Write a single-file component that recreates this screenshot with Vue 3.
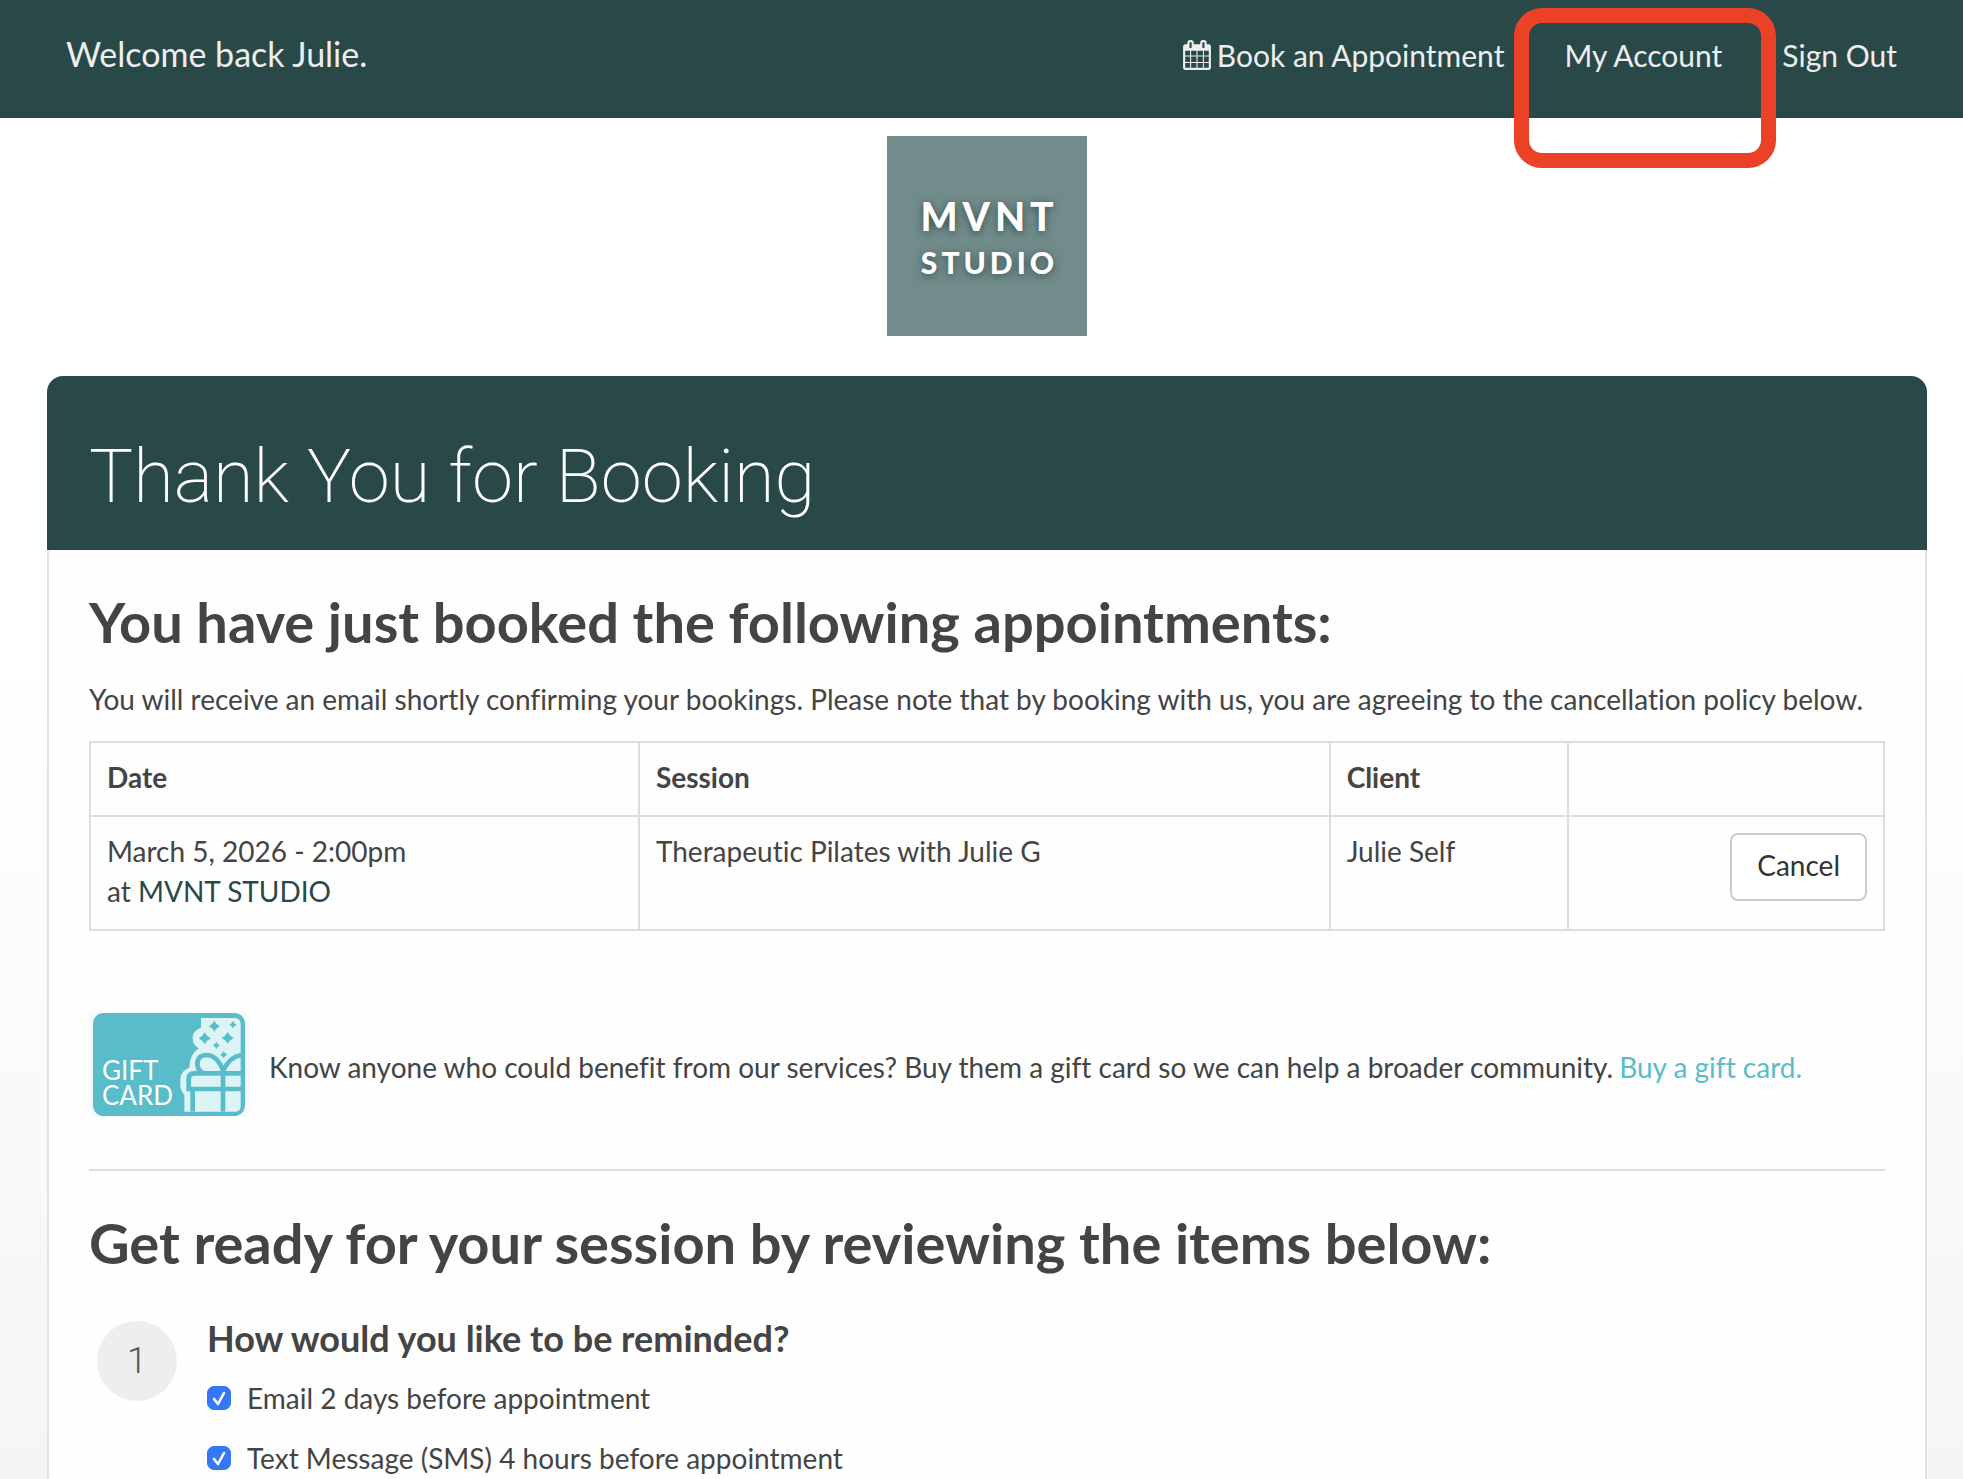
<script setup>
import { ref } from 'vue';

const bookings = ref([
    { id: 1, date: 'March 5, 2026 - 2:00pm', location: 'MVNT STUDIO', session: 'Therapeutic Pilates with Julie G', client: 'Julie Self' },
]);

const reminders = ref([
    { id: 'remind-email', label: 'Email 2 days before appointment', checked: true },
    { id: 'remind-sms', label: 'Text Message (SMS) 4 hours before appointment', checked: true },
]);

const cancel = (id) => {
    bookings.value = bookings.value.filter((b) => b.id !== id);
}
</script>

<template>
    <div class="page">
        <header class="topbar">
            <p class="welcome">Welcome back Julie.</p>
            <nav class="nav">
                <a href="#book">
                    <svg class="calendar" viewBox="0 0 1664 1792" aria-hidden="true">
                        <path fill="currentColor"
                            d="M128 1664h288v-288h-288v288zm352 0h320v-288h-320v288zm-352-352h288v-320h-288v320zm352 0h320v-320h-320v320zm-352-384h288v-288h-288v288zm736 736h320v-288h-320v288zm-384-736h320v-288h-320v288zm768 736h288v-288h-288v288zm-384-352h320v-320h-320v320zm-352-864v-288q0-13-9.5-22.5t-22.5-9.5h-64q-13 0-22.5 9.5t-9.5 22.5v288q0 13 9.5 22.5t22.5 9.5h64q13 0 22.5-9.5t9.5-22.5zm736 864h288v-320h-288v320zm-384-384h320v-288h-320v288zm384 0h288v-288h-288v288zm32-480v-288q0-13-9.5-22.5t-22.5-9.5h-64q-13 0-22.5 9.5t-9.5 22.5v288q0 13 9.5 22.5t22.5 9.5h64q13 0 22.5-9.5t9.5-22.5zm384-64v1280q0 52-38 90t-90 38h-1408q-52 0-90-38t-38-90v-1280q0-52 38-90t90-38h128v-96q0-66 47-113t113-47h64q66 0 113 47t47 113v96h384v-96q0-66 47-113t113-47h64q66 0 113 47t47 113v96h128q52 0 90 38t38 90z" />
                    </svg>
                    <span>Book an Appointment</span>
                </a>
                <a href="#account" class="highlighted">My Account</a>
                <a href="#signout">Sign Out</a>
            </nav>
        </header>

        <div class="content">
            <div class="logo">
                <span class="logo-name">MVNT</span>
                <span class="logo-sub">STUDIO</span>
            </div>

            <main class="card">
                <div class="card-head">
                    <h1>Thank You for Booking</h1>
                </div>
                <div class="card-body">
                    <h2>You have just booked the following appointments:</h2>
                    <p class="intro">You will receive an email shortly confirming your bookings. Please note that by
                        booking with us, you are agreeing to the cancellation policy below.</p>

                    <table class="bookings">
                        <colgroup>
                            <col class="col-date">
                            <col class="col-session">
                            <col class="col-client">
                            <col>
                        </colgroup>
                        <thead>
                            <tr>
                                <th>Date</th>
                                <th>Session</th>
                                <th>Client</th>
                                <th></th>
                            </tr>
                        </thead>
                        <tbody>
                            <tr v-for="b in bookings" :key="b.id">
                                <td>{{ b.date }}<br>at <a href="#location">{{ b.location }}</a></td>
                                <td>{{ b.session }}</td>
                                <td>{{ b.client }}</td>
                                <td class="actions"><button type="button" @click="cancel(b.id)">Cancel</button></td>
                            </tr>
                        </tbody>
                    </table>

                    <section class="gift">
                        <svg class="gift-card" viewBox="27 36 480 318" aria-hidden="true">
                            <rect x="27" y="36" width="480" height="318" fill="#f9f9f9" />
                            <rect x="39" y="42" width="456" height="309" rx="32" fill="#58bdc8" />
                            <path fill="#dcf4f6"
                                d="M363 57H463Q482 57 482 76V322Q482 338 466 338H313V287Q301 275 301 258V240Q303 214 328 206Q328 166 357 148Q338 140 338 117Q338 95 363 86Z" />
                            <!-- sparkles -->
                            <g fill="#58bdc8">
                                <path d="M403 65Q408 77 420 82Q408 87 403 99Q398 87 386 82Q398 77 403 65Z" />
                                <path d="M459 66Q462 74 470 77Q462 80 459 88Q456 80 448 77Q456 74 459 66Z" />
                                <path d="M374 100Q380 112 392 118Q380 124 374 136Q368 124 356 118Q368 112 374 100Z" />
                                <path d="M443 99Q449 111 461 117Q449 123 443 135Q437 123 425 117Q437 111 443 99Z" />
                                <path d="M409 128Q412 136 420 139Q412 142 409 150Q406 142 398 139Q406 136 409 128Z" />
                                <path d="M431 156Q434 164 442 167Q434 170 431 178Q428 170 420 167Q428 164 431 156Z" />
                            </g>
                            <!-- box and bow -->
                            <g fill="none" stroke="#58bdc8" stroke-width="14">
                                <path d="M483 223H343Q326 223 326 240V270H483" />
                                <path d="M338 270V338" />
                                <path d="M429 210V338" />
                                <path d="M430 214Q410 168 379 168Q352 169 352 196Q353 214 368 221" />
                                <path d="M430 214Q450 173 483 168" />
                            </g>
                            <text x="66" y="243">GIFT</text>
                            <text x="66" y="318">CARD</text>
                        </svg>
                        <p>Know anyone who could benefit from our services? Buy them a gift card so we can help a
                            broader community.</p>
                        <a href="#gift">Buy a gift card.</a>
                    </section>

                    <hr>

                    <h2>Get ready for your session by reviewing the items below:</h2>
                    <section class="step">
                        <span class="step-number">1</span>
                        <div>
                            <h3>How would you like to be reminded?</h3>
                            <div v-for="r in reminders" :key="r.id" class="reminder">
                                <span class="check">
                                    <input :id="r.id" v-model="r.checked" type="checkbox">
                                    <svg v-show="r.checked" viewBox="0 0 24 24" aria-hidden="true">
                                        <path d="M7 13L11 18L17 7" fill="none" stroke="#fff" stroke-width="2.6"
                                            stroke-linecap="round" stroke-linejoin="round" />
                                    </svg>
                                </span>
                                <label :for="r.id">{{ r.label }}</label>
                            </div>
                        </div>
                    </section>
                </div>
            </main>
        </div>
    </div>
</template>

<style>
body {
    margin: 0;
    background: #fff;
}
</style>

<style scoped>
.page {
    display: flex;
    flex-direction: column;
    min-height: 100vh;
    background: linear-gradient(180deg, #fff 45%, #f5f5f5 100%);
    color: #444;
    font-family: Lato, 'Open Sans', sans-serif;
    font-size: 28px;
    font-variant-ligatures: none;
    line-height: 40px;
}

h1,
h2,
h3,
p {
    margin: 0;
}

.topbar {
    display: flex;
    justify-content: space-between;
    align-items: baseline;
    box-sizing: border-box;
    height: 118px;
    padding: 34px 66px 0;
    background: #294948;
    border-bottom: 1px solid #263f46;
    color: #eee;
}

.welcome {
    font-size: 34px;
}

.nav {
    display: flex;
    align-items: baseline;
    gap: 60px;
    font-size: 30px;
}

.nav a {
    display: flex;
    align-items: baseline;
    gap: 6px;
    color: #eee;
    text-decoration: none;
}

.calendar {
    align-self: center;
    width: 28px;
    height: 30px;
}

.highlighted {
    position: relative;
}

.highlighted::after {
    content: '';
    position: absolute;
    top: -27px;
    left: -50px;
    right: -54px;
    height: 130px;
    border: 15px solid #eb4127;
    border-radius: 28px;
}

.content {
    display: flex;
    flex: 1;
    flex-direction: column;
    padding: 18px 36px 0 47px;
}

.logo {
    display: flex;
    flex-direction: column;
    align-items: center;
    justify-content: center;
    align-self: center;
    box-sizing: border-box;
    width: 200px;
    height: 200px;
    margin-bottom: 40px;
    padding: 4px 0 0 5px;
    background: #728c8b;
    color: #fff;
    font-weight: 900;
    text-shadow: 0 2px 8px rgba(20, 50, 50, 0.7);
}

.logo-name {
    font-size: 39px;
    line-height: 48px;
    letter-spacing: 5px;
}

.logo-sub {
    font-size: 30px;
    line-height: 44px;
    letter-spacing: 4px;
}

.card {
    display: flex;
    flex: 1;
    flex-direction: column;
}

.card-head {
    padding: 59px 42px 31px;
    background: #294948;
    border-radius: 16px 16px 0 0;
    color: #fff;
}

h1 {
    font-family: Roboto, sans-serif;
    font-size: 74px;
    font-weight: 200;
    line-height: 84px;
}

.card-body {
    flex: 1;
    padding: 40px 40px 0;
    background: #fefefe;
    border: solid #e1e1e1;
    border-width: 0 2px;
}

h2 {
    font-size: 56px;
    font-weight: 700;
    line-height: 64px;
}

.intro {
    margin: 25px 0 22px;
}

.bookings {
    width: 100%;
    table-layout: fixed;
    border-collapse: collapse;
}

.col-date {
    width: 30.6%;
}

.col-session {
    width: 38.5%;
}

.col-client {
    width: 13.3%;
}

th,
td {
    padding: 14px 16px 18px;
    border: 2px solid #ddd;
    text-align: left;
    vertical-align: top;
}

td a {
    color: #294948;
    text-decoration: none;
}

.actions {
    padding: 16px;
    text-align: right;
}

button {
    display: block;
    margin-left: auto;
    padding: 10px 25px 14px;
    background: #fff;
    border: 2px solid #ccc;
    border-radius: 8px;
    color: #333;
    font: inherit;
    cursor: pointer;
}

.gift {
    display: flex;
    align-items: center;
    margin-top: 80px;
}

.gift-card {
    flex: none;
    width: 160px;
    height: 106px;
    margin-right: 20px;
}

.gift-card text {
    fill: #fff;
    font-size: 78px;
    font-weight: 400;
}

.gift p,
.gift a {
    margin-top: 6px;
}

.gift a {
    margin-left: 6px;
    color: #58bdc8;
    text-decoration: none;
}

hr {
    margin: 52px 0 40px;
    border: 0;
    border-top: 2px solid #ddd;
}

.step {
    display: flex;
    gap: 30px;
    margin-top: 43px;
    padding-left: 8px;
}

.step-number {
    width: 80px;
    height: 80px;
    margin-top: 3px;
    background: #eee;
    border-radius: 50%;
    color: #555;
    font-family: Roboto, sans-serif;
    font-size: 36px;
    font-weight: 300;
    line-height: 80px;
    text-align: center;
}

h3 {
    font-size: 36px;
    font-weight: 700;
    line-height: 40px;
}

.reminder {
    display: flex;
    align-items: center;
    gap: 16px;
    margin-top: 20px;
}

.check {
    position: relative;
    width: 24px;
    height: 24px;
}

.check input {
    display: block;
    appearance: none;
    width: 24px;
    height: 24px;
    margin: 0;
    border: 1px solid #bbb;
    border-radius: 7px;
    background: #fff;
}

.check input:checked {
    border-color: #3478f6;
    background: #3478f6;
}

.check svg {
    position: absolute;
    inset: 0;
    pointer-events: none;
}
</style>
